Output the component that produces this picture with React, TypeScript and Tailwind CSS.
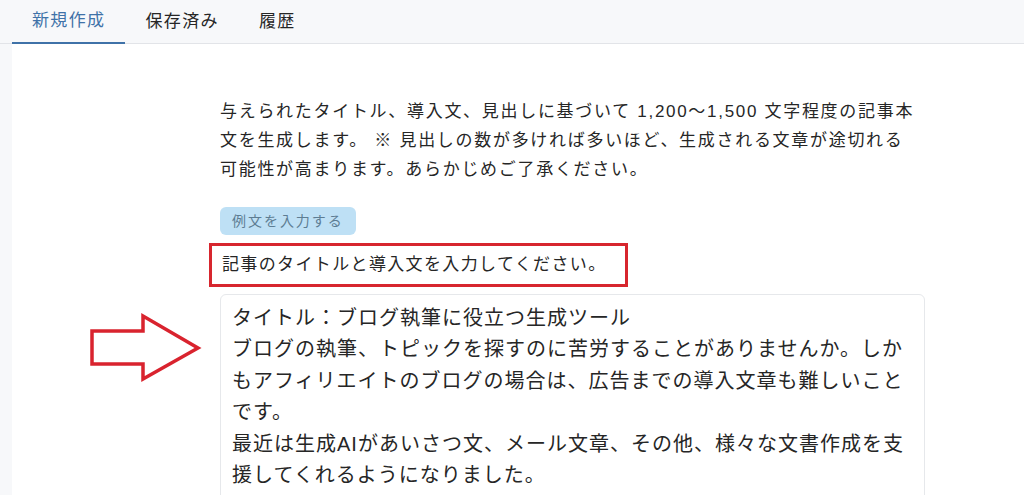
import React from "react";

const tabs = ["新規作成", "保存済み", "履歴"];

const descLines = [
  "与えられたタイトル、導入文、見出しに基づいて 1,200〜1,500 文字程度の記事本",
  "文を生成します。 ※ 見出しの数が多ければ多いほど、生成される文章が途切れる",
  "可能性が高まります。あらかじめご了承ください。",
];

const bodyLines = [
  "タイトル：ブログ執筆に役立つ生成ツール",
  "ブログの執筆、トピックを探すのに苦労することがありませんか。しか",
  "もアフィリエイトのブログの場合は、広告までの導入文章も難しいこと",
  "です。",
  "最近は生成AIがあいさつ文、メール文章、その他、様々な文書作成を支",
  "援してくれるようになりました。",
];

const ArrowMark = () => (
  <svg width="114" height="72" viewBox="0 0 114 72">
    <polygon
      points="4,19 55,19 55,4 110,36 55,67 55,52 4,52"
      fill="#ffffff"
      stroke="#d9232e"
      strokeWidth="3.5"
      strokeLinejoin="miter"
    />
  </svg>
);

export default function App() {
  const [active, setActive] = React.useState(0);

  return (
    <div className="h-[495px] overflow-hidden bg-[#f7f8fa] text-[#262626] font-['Liberation_Sans','Noto_Sans_CJK_JP',sans-serif]">
      {/* tab bar */}
      <div className="flex h-[44px] border-b border-[#e2e4e8] pl-3">
        {tabs.map((t, i) => (
          <button
            key={t}
            onClick={() => setActive(i)}
            className={
              i === active
                ? "px-5 text-[17px] tracking-[0.08em] text-[#3f72a8] border-b-2 border-[#3f72a8] -mb-px"
                : "px-5 text-[17px] tracking-[0.08em] text-[#262626]"
            }
          >
            {t}
          </button>
        ))}
      </div>

      {/* panel */}
      <div className="ml-3 h-full bg-white pt-[53px]">
        <div className="flex">
          <div className="w-[208px] shrink-0" />
          <div className="w-[705px]">
            <p className="text-[17px] leading-[29px] tracking-[0.1em]">
              {descLines.map((l) => (
                <span key={l} className="block whitespace-nowrap">
                  {l}
                </span>
              ))}
            </p>
            <button className="mt-[23px] h-[28px] rounded-md bg-[#bee0f5] px-3 text-[14px] tracking-[0.14em] text-[#5d7d93]">
              例文を入力する
            </button>
            <div className="-ml-[11px] mt-[8px] flex h-[44px] w-[419px] items-center border-[3px] border-[#d7262e] pl-[10px] text-[17px] tracking-[0.08em]">
              記事のタイトルと導入文を入力してください。
            </div>
          </div>
        </div>

        <div className="mt-[7px] flex">
          <div className="w-[208px] shrink-0 pl-[76px] pt-[18px]">
            <ArrowMark />
          </div>
          <div className="h-[240px] w-[705px] rounded-md border border-[#e6e8eb] pl-[11px] pt-[8px] text-[20px] leading-[31.4px] tracking-[0.05em]">
            {bodyLines.map((l) => (
              <div key={l} className="whitespace-nowrap">
                {l}
              </div>
            ))}
          </div>
        </div>
      </div>
    </div>
  );
}
